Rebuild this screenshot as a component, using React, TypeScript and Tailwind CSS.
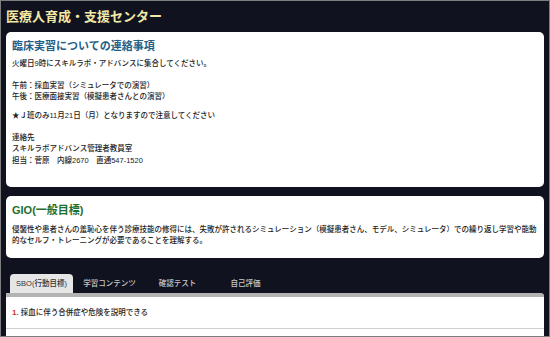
import React from "react";

const font = { fontFamily: '"Liberation Sans", "Noto Sans CJK JP", sans-serif' };

export default function App() {
  return (
    <div
      className="w-[550px] h-[337px] overflow-hidden bg-[#10131f] border border-[#7d7d7d] px-[5px] flex flex-col"
      style={font}
    >
      <div className="h-[31px] pt-[7px] shrink-0">
        <h1 className="text-[13px] leading-[18px] font-bold text-[#f2e9a6]">
          医療人育成・支援センター
        </h1>
      </div>

      <div className="bg-white rounded-[5px] px-[6px] pt-[6px] pb-[21px] shrink-0">
        <h2 className="text-[11px] leading-[16px] font-bold text-[#245e86]">
          臨床実習についての連絡事項
        </h2>
        <div className="mt-[4px] text-[7.5px] leading-[11.5px] text-[#222] font-medium">
          <p>火曜日9時にスキルラボ・アドバンスに集合してください。</p>
          <p className="mt-[10px]">午前：採血実習（シミュレータでの演習）</p>
          <p>午後：医療面接実習（模擬患者さんとの演習）</p>
          <p className="mt-[7.5px]">★Ｊ班のみ11月21日（月）となりますので注意してください</p>
          <p className="mt-[10px]">連絡先</p>
          <p>スキルラボアドバンス管理者教員室</p>
          <p>担当：菅原　内線2670　直通547-1520</p>
        </div>
      </div>

      <div className="mt-[9px] bg-white rounded-[5px] px-[6px] pt-[6px] pb-[11.5px] shrink-0">
        <h2 className="text-[11px] leading-[16px] font-bold text-[#1f6e2e]">GIO(一般目標)</h2>
        <p className="mt-[5.5px] text-[7.5px] leading-[11.5px] text-[#222] font-medium">
          侵襲性や患者さんの羞恥心を伴う診療技能の修得には、失敗が許されるシミュレーション（模擬患者さん、モデル、シミュレータ）での繰り返し学習や能動的なセルフ・トレーニングが必要であることを理解する。
        </p>
      </div>

      <div className="mt-[16px] flex gap-[5px] pl-[4px] shrink-0">
        <div className="w-[63px] h-[19px] rounded-t-[4px] bg-[#e6e6e6] flex items-center justify-center text-[7.5px] font-medium text-[#333]">
          SBO(行動目標)
        </div>
        <div className="w-[63px] h-[19px] flex items-center justify-center text-[7.5px] font-medium text-[#c8c8c8]">
          学習コンテンツ
        </div>
        <div className="w-[63px] h-[19px] flex items-center justify-center text-[7.5px] font-medium text-[#c8c8c8]">
          確認テスト
        </div>
        <div className="w-[63px] h-[19px] flex items-center justify-center text-[7.5px] font-medium text-[#c8c8c8]">
          自己評価
        </div>
      </div>

      <div className="flex-1 bg-white border-t-[4px] border-[#b3b3b3] rounded-tr-[3px]">
        <div className="px-[6px] pt-[10px] pb-[9px] border-b border-[#cfcfcf] text-[7.5px] leading-[11.5px] text-[#222] font-medium">
          <span className="font-bold text-[#d0312d] text-[8px]">1.</span> 採血に伴う合併症や危険を説明できる
        </div>
      </div>
    </div>
  );
}
